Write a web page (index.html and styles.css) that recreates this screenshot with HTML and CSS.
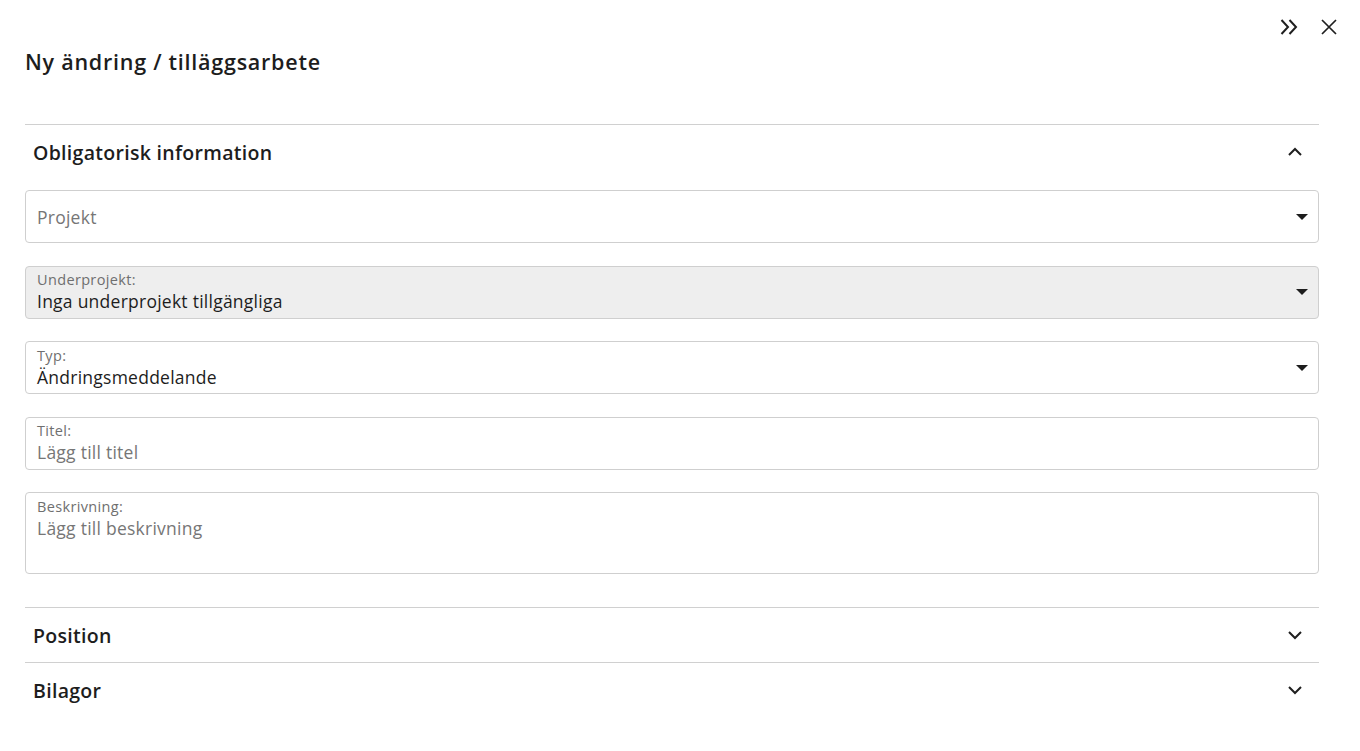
FILE: index.html
```html
<!DOCTYPE html>
<html lang="sv">
<head>
<meta charset="utf-8">
<title>Ny ändring / tilläggsarbete</title>
<link rel="stylesheet" href="styles.css">
</head>
<body>
<div class="panel">
  <div class="toolbar">
    <button class="icon-btn" aria-label="Expandera">
      <svg width="20" height="20" viewBox="0 0 20 20"><path d="M2.5 3 L9 10 L2.5 17 M10.5 3 L17 10 L10.5 17" fill="none" stroke="#1f1f1f" stroke-width="2"/></svg>
    </button>
    <button class="icon-btn" aria-label="Stäng">
      <svg width="20" height="20" viewBox="0 0 20 20"><path d="M3 3 L17 17 M17 3 L3 17" fill="none" stroke="#1f1f1f" stroke-width="1.7"/></svg>
    </button>
  </div>
  <h1 class="title">Ny ändring / tilläggsarbete</h1>

  <section class="section open">
    <div class="section-head">
      <span class="section-title">Obligatorisk information</span>
      <svg class="chev" width="16" height="16" viewBox="0 0 16 16"><path d="M2 11 L8 5 L14 11" fill="none" stroke="#1f1f1f" stroke-width="2"/></svg>
    </div>
    <div class="fields">
      <div class="field select single">
        <span class="placeholder">Projekt</span>
        <span class="caret"></span>
      </div>
      <div class="field select disabled">
        <div class="stack">
          <span class="label">Underprojekt:</span>
          <span class="value">Inga underprojekt tillgängliga</span>
        </div>
        <span class="caret"></span>
      </div>
      <div class="field select">
        <div class="stack">
          <span class="label">Typ:</span>
          <span class="value">Ändringsmeddelande</span>
        </div>
        <span class="caret"></span>
      </div>
      <div class="field">
        <div class="stack">
          <span class="label">Titel:</span>
          <span class="placeholder">Lägg till titel</span>
        </div>
      </div>
      <div class="field area">
        <div class="stack">
          <span class="label">Beskrivning:</span>
          <span class="placeholder">Lägg till beskrivning</span>
        </div>
      </div>
    </div>
  </section>

  <section class="section">
    <div class="section-head">
      <span class="section-title">Position</span>
      <svg class="chev" width="16" height="16" viewBox="0 0 16 16"><path d="M2 5 L8 11 L14 5" fill="none" stroke="#1f1f1f" stroke-width="2"/></svg>
    </div>
  </section>
  <section class="section">
    <div class="section-head">
      <span class="section-title">Bilagor</span>
      <svg class="chev" width="16" height="16" viewBox="0 0 16 16"><path d="M2 5 L8 11 L14 5" fill="none" stroke="#1f1f1f" stroke-width="2"/></svg>
    </div>
  </section>
</div>
</body>
</html>
```
FILE: styles.css
```css
* { box-sizing: border-box; }
html, body { margin: 0; padding: 0; background: #fff; }
body { font-family: "Open Sans", "Noto Sans", sans-serif; color: #1d1d1d; }
.panel { padding: 0 41px 0 25px; width: 1360px; height: 751px; }
.toolbar { display: flex; justify-content: flex-end; gap: 20px; height: 49px; padding-top: 17px; margin-right: -20px; }
.icon-btn { border: 0; background: none; padding: 0; width: 20px; height: 20px; display: flex; align-items: center; justify-content: center; }
.title { margin: 0; font-size: 21.5px; font-weight: 600; line-height: 26px; height: 75px; letter-spacing: 0.75px; }
.section { border-top: 1px solid #d0d0d0; }
.section-head { height: 54px; display: flex; align-items: center; justify-content: space-between; padding: 0 16px 0 8px; }
.section-title { font-size: 19.5px; font-weight: 600; letter-spacing: 0.3px; }
.fields { display: flex; flex-direction: column; gap: 22.5px; padding: 11px 0 33px; }
.field { height: 53px; border: 1px solid #cfcfcf; border-radius: 4px; display: flex; align-items: center; padding: 0 11px; font-family: "Open Sans", sans-serif; }
.field.area { height: 82px; align-items: flex-start; padding-top: 5px; }
.field.disabled { background: #eeeeee; }
.stack { display: flex; flex-direction: column; flex: 1; }
.label { font-size: 14.5px; color: #6f6f6f; line-height: 18px; letter-spacing: 0.35px; }
.value { font-size: 17.5px; color: #1d1d1d; line-height: 24px; letter-spacing: 0.25px; }
.placeholder { font-size: 17.5px; color: #767676; line-height: 24px; letter-spacing: 0.25px; flex: 1; }
.stack .placeholder { flex: none; }
.caret { width: 0; height: 0; border-left: 6px solid transparent; border-right: 6px solid transparent; border-top: 6px solid #1d1d1d; margin-right: -1px; }
```
